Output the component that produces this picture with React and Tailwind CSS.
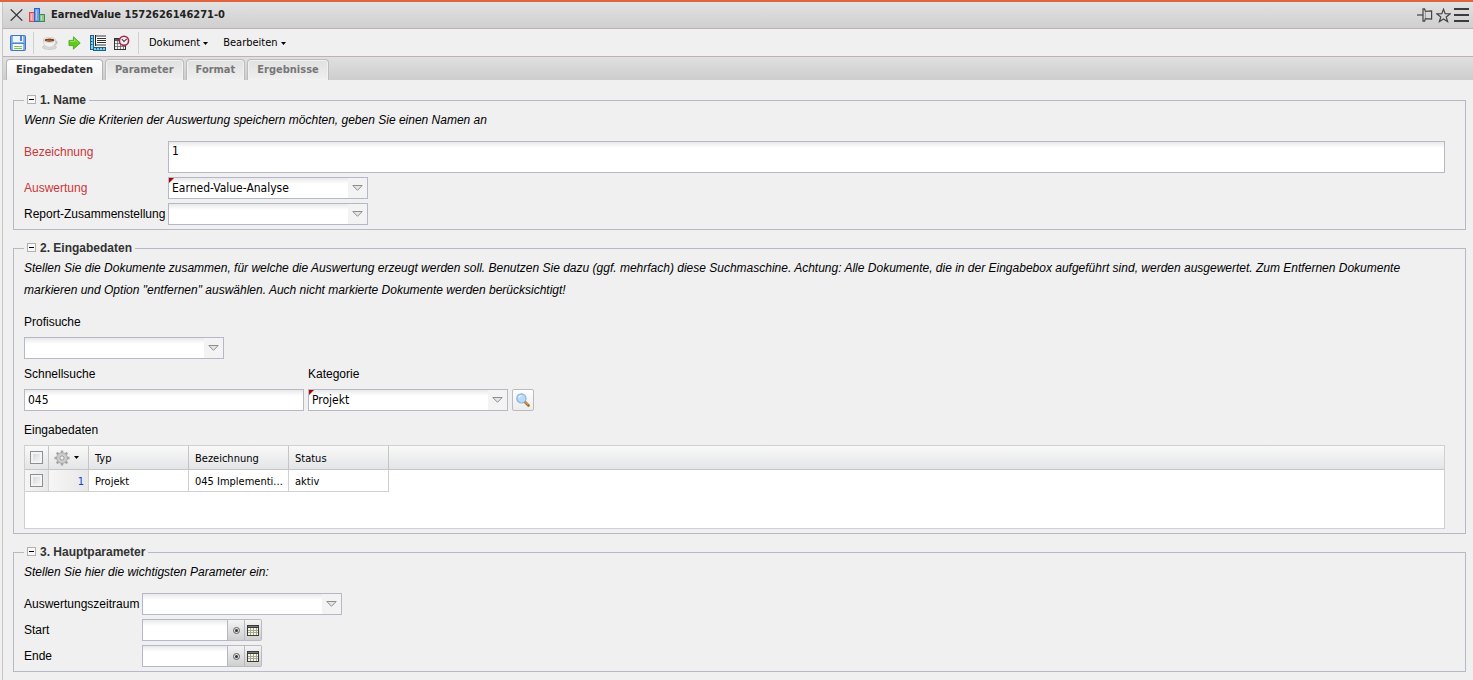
import React from "react";

const tabs = ["Eingabedaten", "Parameter", "Format", "Ergebnisse"];

const rows = [
  { id: 1, typ: "Projekt", name: "045 Implementi...", status: "aktiv" },
];

const inputClass =
  "border border-[#b5b8c8] bg-white bg-[linear-gradient(#e9e9e9,#ffffff_6px)] outline-none";

const CloseIcon = () => (
  <svg width="13" height="12" viewBox="0 0 13 12" fill="none" stroke="#333" strokeWidth="1.3">
    <path d="M.7 .4 12.3 11.6M12.3 .4 .7 11.6" />
  </svg>
);

const ChartIcon = () => (
  <svg width="16" height="14" viewBox="0 0 16 14">
    <rect x=".5" y="4.5" width="5" height="9" fill="#f59a9a" stroke="#e8414b" />
    <rect x="5.5" y=".5" width="5" height="13" fill="#6fa0ea" stroke="#2f62c4" />
    <rect x="10.5" y="6.5" width="5" height="7" fill="#8fc490" stroke="#3f8d56" />
    <path d="M2.5 6v6" stroke="#fbc4c4" />
    <path d="M7.5 2v10" stroke="#a5c8f8" />
    <path d="M12.5 8v4" stroke="#c2e2bd" />
  </svg>
);

const PinIcon = () => (
  <svg width="16" height="14" viewBox="0 0 16 14" fill="none" stroke="#444" strokeWidth="1.2">
    <path d="M0 7h6" />
    <path d="M6 .8h1.6l.8 2.6 6.2-.6v8.4l-6.2-.6-.8 2.6H6z" />
    <path d="M8.4 3.4v7.2" stroke="#888" strokeWidth=".8" />
  </svg>
);

const StarIcon = () => (
  <svg width="15" height="15" viewBox="0 0 15 15" fill="none" stroke="#444" strokeWidth="1.2">
    <path d="M7.5 1.2 9.2 5.7l4.9.2-3.9 3 1.4 4.7-4.1-2.7-4.1 2.7 1.4-4.7-3.9-3 4.9-.2z" />
  </svg>
);

const MenuIcon = () => (
  <svg width="15" height="14" viewBox="0 0 15 14" fill="#3c3c3c">
    <rect width="15" height="2" />
    <rect y="6" width="15" height="2" />
    <rect y="12" width="15" height="2" />
  </svg>
);

const SaveIcon = () => (
  <svg width="16" height="16" viewBox="0 0 16 16">
    <rect x=".5" y=".5" width="15" height="15" rx="1" fill="#6a9de2" stroke="#3f74c4" />
    <rect x="1.5" y="1.5" width="13" height="13" fill="#8ab6ee" />
    <rect x="3" y="1" width="10" height="6" fill="#eef4fc" />
    <rect x="10" y="1" width="2" height="5" fill="#4f84d0" />
    <path d="M1.5 8.5h13" stroke="#4f84d0" />
    <rect x="3" y="9" width="10" height="6" fill="#f4f8f0" />
    <path d="M4 11.5h8M4 13.5h8" stroke="#7cc35c" />
  </svg>
);

const CoffeeIcon = () => (
  <svg width="16" height="16" viewBox="0 0 16 16">
    <ellipse cx="7.5" cy="12.2" rx="7" ry="2.3" fill="#d9d9d9" stroke="#bcbcbc" strokeWidth=".6" />
    <path d="M12.5 6.2c3.6-.6 3.2 3.4-.9 3.6" fill="none" stroke="#bdbdbd" strokeWidth="1.2" />
    <path d="M1.3 5.2c0 4.5 2.4 7 6.2 7s6.2-2.5 6.2-7z" fill="#f4f2f0" stroke="#c4c0bd" strokeWidth=".6" />
    <ellipse cx="7.5" cy="5" rx="6.2" ry="2.5" fill="#f7f7f7" stroke="#c4bdb8" strokeWidth=".6" />
    <ellipse cx="7.5" cy="5.1" rx="4.9" ry="1.7" fill="#7d3f22" />
    <ellipse cx="7" cy="5.5" rx="3" ry=".8" fill="#a86242" />
  </svg>
);

const RunIcon = () => (
  <svg width="13" height="14" viewBox="0 0 13 14">
    <path d="M1 4.4h4.400V.8l6.800 6.200-6.800 6.200V9.600H1z" fill="#5ecb1c" stroke="#48a818" strokeWidth=".9" strokeLinejoin="round" />
    <path d="M2 5.500h4.500V3.200l3.800 3.500" fill="none" stroke="#97e45c" />
  </svg>
);

const RulerIcon = () => (
  <svg width="16" height="16" viewBox="0 0 16 16">
    <rect x=".5" y=".5" width="3" height="14" fill="#7fd0f0" stroke="#1c5f80" />
    <path d="M1 3.500h1.500M1 6.500h1.500M1 9.500h1.500" stroke="#1c5f80" />
    <rect x="3.500" y="12.500" width="12" height="3" fill="#7fd0f0" stroke="#1c5f80" />
    <path d="M6.500 13v1.500M9.500 13v1.500M12.500 13v1.500" stroke="#1c5f80" />
    <rect x="5" y="0" width="11" height="12" fill="#fff" />
    <path d="M5 1h11M7 3.500h9M7 5.500h9M7 7.500h9M5 10h11" stroke="#333" />
    <path d="M5.500 0v11" stroke="#222" />
  </svg>
);

const ScheduleIcon = () => (
  <svg width="16" height="16" viewBox="0 0 16 16">
    <rect x=".5" y="3.5" width="11" height="11" fill="#f2f2f2" stroke="#333" />
    <rect x="1" y="4" width="10" height="2" fill="#555" />
    <path d="M3.5 6v8M6.500 6v8M9.500 6v8M1 8.500h10M1 11.500h10" stroke="#666" strokeWidth=".8" />
    <circle cx="10" cy="5.800" r="4.600" fill="#fbeef2" stroke="#a82550" strokeWidth="1.600" />
    <path d="M7.800 4.200 10 6.400l2.800-2.600" fill="none" stroke="#444" strokeWidth="1.100" />
  </svg>
);

const GearIcon = () => (
  <svg width="16" height="16" viewBox="0 0 16 16">
    <g stroke="#a6a6a6" strokeWidth="2.400">
      <path d="M8 .5v15M.5 8h15M2.700 2.700l10.600 10.600M13.300 2.700 2.700 13.300" />
    </g>
    <circle cx="8" cy="8" r="5.400" fill="#cecece" stroke="#a0a0a0" strokeWidth=".8" />
    <circle cx="8" cy="8" r="2.100" fill="#f0f0f0" stroke="#8e8e8e" strokeWidth=".8" />
  </svg>
);

const SearchIcon = () => (
  <svg width="14" height="14" viewBox="0 0 14 14">
    <path d="m9 9 3.500 3.500" stroke="#a06a2c" strokeWidth="2.600" strokeLinecap="round" />
    <path d="m9.200 8.800 3 3" stroke="#dfa050" strokeWidth="1.200" />
    <circle cx="5.400" cy="5.400" r="4.600" fill="#b9dbfa" stroke="#86b0de" strokeWidth="1.200" />
    <path d="M2.800 5c.2-1.400 1.200-2.300 2.600-2.400" fill="none" stroke="#eef8ff" strokeWidth="1.200" />
  </svg>
);

const CalendarIcon = () => (
  <svg width="12" height="11" viewBox="0 0 12 11" shapeRendering="crispEdges">
    <rect width="12" height="11" fill="#3a3a3a" />
    <rect x="1" y="3" width="10" height="7" fill="#f6f6dc" />
    <rect x="1" y="1" width="10" height="1" fill="#777" />
    <path d="M3.500 3v7M6.500 3v7M9.500 3v7M1 5.500h10M1 7.500h10" stroke="#a5a598" />
  </svg>
);

const Caret = () => (
  <svg width="5" height="3" viewBox="0 0 5 3" className="shrink-0">
    <path d="M0 0h5L2.5 3z" fill="#000" />
  </svg>
);

const ComboBox = ({ id, value = "", marked }) => (
  <div className="relative h-[22px] w-[200px]">
    <select
      id={id}
      defaultValue={value}
      className={`h-full w-full appearance-none pr-5 pl-[3px] text-[12px] ${inputClass}`}
    >
      <option>{value}</option>
    </select>
    <span className="pointer-events-none absolute inset-y-px right-px flex w-[19px] items-center justify-center bg-[#f3f3f3]">
      <svg width="11" height="6" viewBox="0 0 11 6">
        <path d="M.8 .5h9.4L5.5 5.3z" fill="#e4e4e4" stroke="#8f8f8f" />
      </svg>
    </span>
    {marked && (
      <svg width="5" height="5" viewBox="0 0 5 5" className="pointer-events-none absolute top-px left-px">
        <path d="M0 0h5L0 5z" fill="#b00000" />
      </svg>
    )}
  </div>
);

const DateField = ({ id }) => (
  <div className="flex h-[22px] w-[120px]">
    <input id={id} type="text" className={`w-[86px] px-[3px] ${inputClass}`} />
    <button
      type="button"
      aria-label="Heute"
      className="flex w-[17px] items-center justify-center border-y border-r border-[#b9b9c2] bg-linear-to-b from-[#f4f4f4] to-[#cfcfcf]"
    >
      <svg width="7" height="7" viewBox="0 0 7 7">
        <circle cx="3.5" cy="3.5" r="3" fill="none" stroke="#555" strokeWidth=".9" />
        <circle cx="3.5" cy="3.5" r="1.5" fill="#333" />
      </svg>
    </button>
    <button
      type="button"
      aria-label="Kalender"
      className="flex w-[17px] items-center justify-center rounded-r-xs border-y border-r border-[#b9b9c2] bg-linear-to-b from-[#f4f4f4] to-[#cfcfcf]"
    >
      <CalendarIcon />
    </button>
  </div>
);

const Section = ({ title, hint, children }) => (
  <fieldset className="min-w-0 border border-[#b5b8c8] pr-5 pb-1 pl-[10px]">
    <legend className="flex h-[17px] items-center gap-1 px-[3px] pb-[2px] font-['Liberation_Sans',Arial,sans-serif] text-[12px] font-bold text-[#333]">
      <button type="button" aria-label={title} className="flex size-[9px] items-center justify-center border border-[#b0b0b0] bg-[#f8f8f8]">
        <span className="h-px w-[5px] bg-black" />
      </button>
      {title}
    </legend>
    <p className="mb-[10px] font-['Liberation_Sans',Arial,sans-serif] leading-[22px] italic">{hint}</p>
    {children}
  </fieldset>
);

const Label = ({ id, required, className = "", children }) => (
  <label
    htmlFor={id}
    className={`block shrink-0 font-['Liberation_Sans',Arial,sans-serif] leading-[22px] whitespace-nowrap ${required ? "text-[#c8373c]" : ""} ${className}`}
  >
    {children}
  </label>
);

const Check = ({ label }) => (
  <input
    type="checkbox"
    aria-label={label}
    className="mx-auto block size-[13px] appearance-none border border-[#8e8f8f] bg-linear-to-br from-[#cfd3d9] to-[#fafafa] shadow-[inset_0_0_0_2px_#f4f4f4]"
  />
);

const App = () => {
  return (
    <div className="flex min-h-screen flex-col border-t-2 border-[#e0623f] bg-[#f0f0f0] pl-[2px] font-['DejaVu_Sans_Condensed',Tahoma,sans-serif] text-[12px] text-black">
      <div className="grow border-l border-[#c6c6c6]">
        <header className="flex h-[27px] items-center border-b border-[#bfb0b8] bg-linear-to-b from-[#e2e2e2] to-[#cfcfcf] pr-1 pl-[7px]">
          <button type="button" aria-label="Schließen">
            <CloseIcon />
          </button>
          <span className="mr-[6px] ml-[6px]">
            <ChartIcon />
          </span>
          <h1 className="grow pt-px text-[11px] font-bold text-[#222]">
            EarnedValue 1572626146271-0
          </h1>
          <div className="flex items-center gap-[3px]">
            <button type="button" aria-label="Anheften"><PinIcon /></button>
            <button type="button" aria-label="Favorit"><StarIcon /></button>
            <button type="button" aria-label="Menü"><MenuIcon /></button>
          </div>
        </header>

        <div className="flex h-7 items-center border-b border-[#bfb0b8] pl-[7px] text-[11px]">
          <button type="button" aria-label="Speichern"><SaveIcon /></button>
          <span className="mr-2 ml-[7px] h-[22px] w-px bg-[#d0d0d0]" />
          <div className="flex items-center gap-2 pt-px">
            <button type="button" aria-label="Pause" className="flex w-4 justify-center"><CoffeeIcon /></button>
            <button type="button" aria-label="Ausführen" className="flex w-4 justify-center"><RunIcon /></button>
            <button type="button" aria-label="Layout" className="flex w-4 justify-center"><RulerIcon /></button>
            <button type="button" aria-label="Zeitplan" className="flex w-4 justify-center"><ScheduleIcon /></button>
          </div>
          <span className="mr-[10px] ml-2 h-[22px] w-px bg-[#d0d0d0]" />
          <div className="flex items-center gap-[15px] pt-[2px]">
            <button type="button" className="flex items-center gap-[3px]">
              Dokument <Caret />
            </button>
            <button type="button" className="flex items-center gap-[3px]">
              Bearbeiten <Caret />
            </button>
          </div>
        </div>

        <nav className="flex h-[23px] items-end gap-[2px] bg-linear-to-b from-[#e0e0e0] to-[#cdcdcd] pl-[3px]">
          {tabs.map((tab, i) => (
            <button
              key={tab}
              type="button"
              className={`h-[21px] rounded-t-sm border border-b-0 px-[9px] pt-px text-[11px] font-bold ${
                i === 0
                  ? "border-[#b4b4b4] bg-linear-to-b from-white to-[#f0f0f0] text-[#333]"
                  : "border-[#bcbcbc] bg-linear-to-b from-[#e0e0e0] to-[#f0f0f0] text-[#777] shadow-[inset_0_0_0_1px_#f2f2f2]"
              }`}
            >
              {tab}
            </button>
          ))}
        </nav>

        <main className="flex flex-col gap-[10px] pt-3 pr-[7px] pb-2 pl-[10px]">
          <Section
            title="1. Name"
            hint="Wenn Sie die Kriterien der Auswertung speichern möchten, geben Sie einen Namen an"
          >
            <div className="flex flex-col gap-1">
              <div className="flex">
                <Label id="bezeichnung" required className="w-36">Bezeichnung</Label>
                <textarea
                  id="bezeichnung"
                  defaultValue="1"
                  className={`block h-8 grow resize-none px-[3px] py-px leading-4 ${inputClass}`}
                />
              </div>
              <div className="flex">
                <Label id="auswertung" required className="w-36">Auswertung</Label>
                <ComboBox id="auswertung" value="Earned-Value-Analyse" marked />
              </div>
              <div className="flex">
                <Label id="report" className="w-36">Report-Zusammenstellung</Label>
                <ComboBox id="report" />
              </div>
            </div>
          </Section>

          <Section
            title="2. Eingabedaten"
            hint={
              'Stellen Sie die Dokumente zusammen, für welche die Auswertung erzeugt werden soll. Benutzen Sie dazu (ggf. mehrfach) diese Suchmaschine. Achtung: Alle Dokumente, die in der Eingabebox aufgeführt sind, werden ausgewertet. Zum Entfernen Dokumente markieren und Option "entfernen" auswählen. Auch nicht markierte Dokumente werden berücksichtigt!'
            }
          >
            <div className="flex flex-col gap-1">
              <Label id="profisuche">Profisuche</Label>
              <ComboBox id="profisuche" />
              <div className="mb-1 flex items-end gap-1">
                <div className="flex w-[280px] flex-col gap-1">
                  <Label id="schnellsuche">Schnellsuche</Label>
                  <input
                    id="schnellsuche"
                    type="text"
                    defaultValue="045"
                    className={`h-[22px] px-[3px] ${inputClass}`}
                  />
                </div>
                <div className="flex flex-col gap-1">
                  <Label id="kategorie">Kategorie</Label>
                  <ComboBox id="kategorie" value="Projekt" marked />
                </div>
                <button
                  type="button"
                  aria-label="Suchen"
                  className="flex size-[22px] items-center justify-center rounded-xs border border-[#bbb] bg-linear-to-b from-white to-[#ececec]"
                >
                  <SearchIcon />
                </button>
              </div>
              <p className="font-['Liberation_Sans',Arial,sans-serif] leading-[22px]">Eingabedaten</p>
              <div className="h-[84px] overflow-hidden border border-[#d0d0d0] bg-white">
                <table className="w-full table-fixed border-separate border-spacing-0 text-left text-[11px] leading-4">
                  <colgroup>
                    <col className="w-6" />
                    <col className="w-10" />
                    <col className="w-[100px]" />
                    <col className="w-[100px]" />
                    <col className="w-[100px]" />
                    <col />
                  </colgroup>
                  <thead>
                    <tr className="h-6 bg-linear-to-b from-[#f9f9f9] to-[#e3e4e6] *:border-b *:border-[#c5c5c5] *:font-normal">
                      <th className="border-r p-0"><Check label="Alle auswählen" /></th>
                      <th className="border-r p-0">
                        <button type="button" aria-label="Optionen" className="flex items-center gap-1 pl-[5px]">
                          <GearIcon />
                          <Caret />
                        </button>
                      </th>
                      <th className="border-r px-[6px] pt-[2px] pb-0">Typ</th>
                      <th className="border-r px-[6px] pt-[2px] pb-0">Bezeichnung</th>
                      <th className="border-r px-[6px] pt-[2px] pb-0">Status</th>
                      <th className="p-0" />
                    </tr>
                  </thead>
                  <tbody>
                    {rows.map((row) => (
                      <tr key={row.id} className="h-[22px] *:border-[#d0d0d0]">
                        <td className="border-r border-b bg-linear-to-r from-[#f6f6f6] to-[#e8e8e8] p-0">
                          <Check label={row.name} />
                        </td>
                        <td className="border-r border-b bg-linear-to-r from-[#f6f6f6] to-[#e8e8e8] pt-[2px] pr-1 pb-0 text-right text-[#0f3fd0]">
                          {row.id}
                        </td>
                        <td className="border-r border-b pt-[2px] pb-0 pl-[6px] whitespace-nowrap">{row.typ}</td>
                        <td className="border-r border-b pt-[2px] pb-0 pl-[6px] whitespace-nowrap">{row.name}</td>
                        <td className="border-r border-b pt-[2px] pb-0 pl-[6px] whitespace-nowrap">{row.status}</td>
                        <td className="p-0" />
                      </tr>
                    ))}
                  </tbody>
                </table>
              </div>
            </div>
          </Section>

          <Section title="3. Hauptparameter" hint="Stellen Sie hier die wichtigsten Parameter ein:">
            <div className="flex flex-col gap-1">
              <div className="flex">
                <Label id="zeitraum" className="w-[118px]">Auswertungszeitraum</Label>
                <ComboBox id="zeitraum" />
              </div>
              <div className="flex">
                <Label id="start" className="w-[118px]">Start</Label>
                <DateField id="start" />
              </div>
              <div className="flex">
                <Label id="ende" className="w-[118px]">Ende</Label>
                <DateField id="ende" />
              </div>
            </div>
          </Section>
        </main>
      </div>
    </div>
  );
};

export default App;
